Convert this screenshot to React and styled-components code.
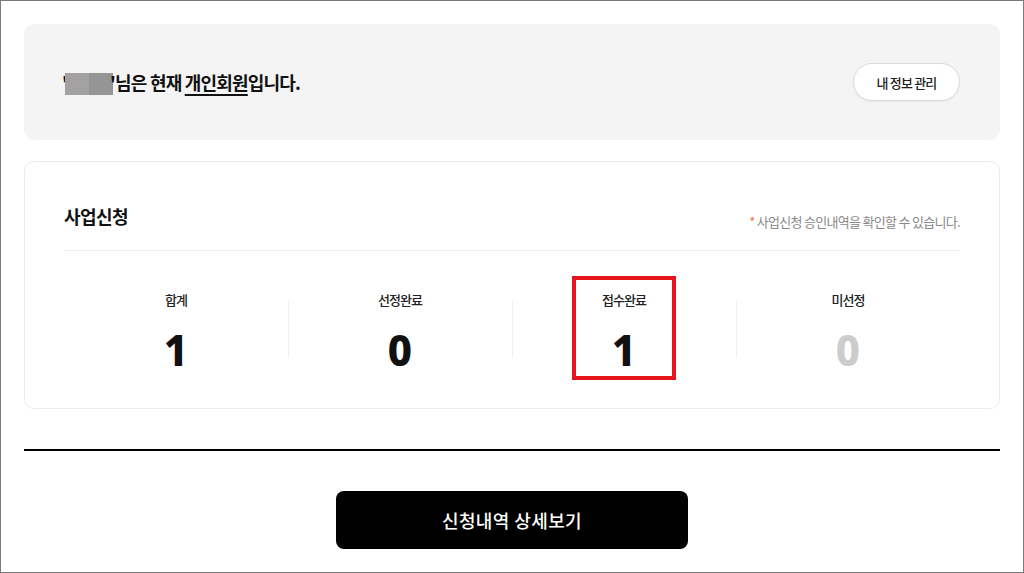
import React from "react";
import styled, { createGlobalStyle } from "styled-components";

const GlobalStyle = createGlobalStyle`
  html, body { margin: 0; padding: 0; background: #fff; }
  body { font-family: "Noto Sans CJK KR", "Noto Sans", sans-serif; color: #111; }
  * { box-sizing: border-box; }
`;

const Frame = styled.div`
  width: 1024px;
  height: 573px;
  border: 1px solid #7a7a7a;
  padding: 23px 23px 0;
  display: flex;
  flex-direction: column;
`;

const MemberCard = styled.section`
  height: 116px;
  background: #f4f4f4;
  border-radius: 10px;
  padding: 0 40px 0 38px;
  display: flex;
  align-items: center;
  justify-content: space-between;
`;

const Greeting = styled.p`
  margin: 0;
  font-size: 18px;
  font-weight: 700;
  letter-spacing: -0.8px;
  line-height: 24px;
  color: #111;
`;

const Masked = styled.span`
  display: inline-block;
  width: 48px;
  height: 22px;
  margin: 0 -3px 0 -2px;
  vertical-align: -5px;
  background: linear-gradient(90deg, #a3a1a2 0 50%, #959595 50% 100%);
`;

const Underlined = styled.span`
  text-decoration: underline;
  text-decoration-thickness: 2px;
  text-underline-offset: 4px;
`;

const PillButton = styled.button`
  width: 107px;
  height: 38px;
  border-radius: 19px;
  border: 1px solid #dcdcdc;
  background: #fff;
  box-shadow: 0 1px 2px rgba(0, 0, 0, 0.06);
  font-family: inherit;
  font-size: 13px;
  font-weight: 500;
  letter-spacing: -0.8px;
  color: #222;
  cursor: pointer;
`;

const InfoCard = styled.section`
  margin-top: 21px;
  border: 1px solid #ebebeb;
  border-radius: 10px;
  padding: 0 39px;
`;

const CardHeader = styled.div`
  display: flex;
  justify-content: space-between;
  align-items: flex-end;
  padding: 42px 0 22px;
  border-bottom: 1px solid #eeeeee;
`;

const CardTitle = styled.h2`
  margin: 0;
  font-size: 18px;
  line-height: 24px;
  font-weight: 700;
  letter-spacing: -0.6px;
  color: #111;
`;

const Note = styled.p`
  margin: 0 0 -3px;
  font-size: 13px;
  line-height: 18px;
  letter-spacing: -0.7px;
  color: #888;

  &::before {
    content: "* ";
    color: #f07a3c;
  }
`;

const StatGrid = styled.div`
  display: grid;
  grid-template-columns: repeat(4, 1fr);
  padding: 25px 0 28px;
`;

const StatCell = styled.div`
  position: relative;
  display: flex;
  justify-content: center;

  & + &::before {
    content: "";
    position: absolute;
    left: 0;
    top: 24px;
    height: 58px;
    width: 1px;
    background: #f0f0f0;
  }
`;

const StatBox = styled.div`
  width: 104px;
  height: 104px;
  border: 4px solid ${(p) => (p.$highlight ? "#e8141c" : "transparent")};
  padding-top: 11px;
  display: flex;
  flex-direction: column;
  align-items: center;
`;

const StatLabel = styled.span`
  font-size: 13px;
  line-height: 18px;
  font-weight: 500;
  letter-spacing: -1px;
  color: #222;
`;

const StatValue = styled.strong`
  margin-top: 19px;
  font-family: "Noto Sans", sans-serif;
  font-size: 42px;
  line-height: 44px;
  font-weight: 800;
  color: ${(p) => (p.$muted ? "#cccccc" : "#111")};
`;

const Rule = styled.hr`
  margin: 40px 0 0;
  border: 0;
  height: 2px;
  background: #000;
`;

const Footer = styled.div`
  display: flex;
  justify-content: center;
  padding-top: 40px;
`;

const DetailButton = styled.button`
  width: 352px;
  height: 58px;
  border: 0;
  border-radius: 8px;
  background: #000;
  color: #fff;
  font-family: inherit;
  font-size: 18px;
  font-weight: 500;
  letter-spacing: 0.4px;
  cursor: pointer;
`;

const stats = [
  { label: "합계", value: 1 },
  { label: "선정완료", value: 0 },
  { label: "접수완료", value: 1, highlight: true },
  { label: "미선정", value: 0, muted: true },
];

export default function App() {
  return (
    <>
      <GlobalStyle />
      <Frame>
        <MemberCard>
          <Greeting>
            '<Masked />'님은 현재 <Underlined>개인회원</Underlined>입니다.
          </Greeting>
          <PillButton type="button">내 정보 관리</PillButton>
        </MemberCard>

        <InfoCard>
          <CardHeader>
            <CardTitle>사업신청</CardTitle>
            <Note>사업신청 승인내역을 확인할 수 있습니다.</Note>
          </CardHeader>
          <StatGrid>
            {stats.map((s) => (
              <StatCell key={s.label}>
                <StatBox $highlight={s.highlight}>
                  <StatLabel>{s.label}</StatLabel>
                  <StatValue $muted={s.muted}>{s.value}</StatValue>
                </StatBox>
              </StatCell>
            ))}
          </StatGrid>
        </InfoCard>

        <Rule />
        <Footer>
          <DetailButton type="button">신청내역 상세보기</DetailButton>
        </Footer>
      </Frame>
    </>
  );
}
